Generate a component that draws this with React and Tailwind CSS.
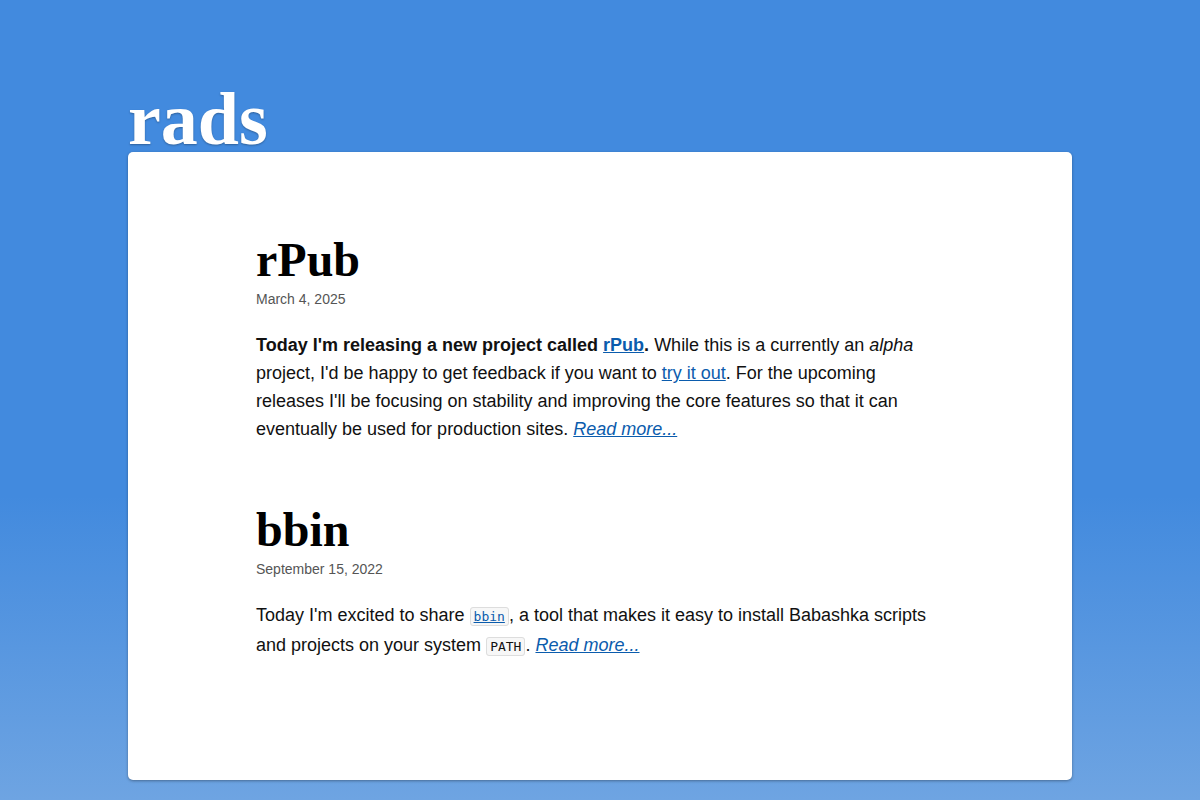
import React from 'react';

const codeCls =
  "font-['DejaVu_Sans_Mono',monospace] text-[13px] leading-4 px-[3px] py-[1px] border border-[#ddd] rounded-[3px] bg-[#f7f7f7]";

const posts = [
  {
    title: 'rPub',
    date: 'March 4, 2025',
    body: (
      <p className="leading-7">
        <strong>
          Today I'm releasing a new project called{' '}
          <a href="#" className="text-[#0b5cad] underline">rPub</a>.
        </strong>{' '}
        While this is a currently an <em>alpha</em> project, I'd be happy to get feedback if you want to{' '}
        <a href="#" className="text-[#0b5cad] underline">try it out</a>. For the upcoming releases I'll be
        focusing on stability and improving the core features so that it can eventually be used for
        production sites.{' '}
        <a href="#" className="text-[#0b5cad] underline italic">Read more...</a>
      </p>
    ),
  },
  {
    title: 'bbin',
    date: 'September 15, 2022',
    body: (
      <p className="leading-[30px] -mt-px">
        Today I'm excited to share{' '}
        <code className={codeCls}>
          <a href="#" className="text-[#0b5cad] underline">bbin</a>
        </code>
        , a tool that makes it easy to install Babashka scripts and projects on your system{' '}
        <code className={codeCls}>PATH</code>
        .{' '}
        <a href="#" className="text-[#0b5cad] underline italic">Read more...</a>
      </p>
    ),
  },
];

function Post({ post }) {
  return (
    <article className="mb-[61px]">
      <h2 className="font-['Liberation_Serif',serif] font-bold text-5xl leading-[1.1] text-black">
        {post.title}
      </h2>
      <div className="text-sm text-[#555] mt-[2px] mb-[22px]">{post.date}</div>
      <div className="text-lg text-[#111]">{post.body}</div>
    </article>
  );
}

export default function App() {
  return (
    <div className="min-h-[800px] bg-[linear-gradient(to_bottom,#428ade_0%,#428ade_62%,#6ea4e2_100%)] font-['Liberation_Sans',Arial,sans-serif]">
      <div className="w-[944px] mx-auto pt-[79px] pb-5">
        <h1 className="font-['Liberation_Serif',serif] font-bold text-[74px] leading-[1.1] text-white [text-shadow:0_1px_2px_rgba(0,0,0,0.3)]">
          rads
        </h1>
        <main className="relative -mt-2 bg-white rounded-[5px] shadow-[0_1px_3px_rgba(0,0,0,0.35)] h-[628px] px-32 pt-[82px]">
          {posts.map((p) => (
            <Post key={p.title} post={p} />
          ))}
        </main>
      </div>
    </div>
  );
}
